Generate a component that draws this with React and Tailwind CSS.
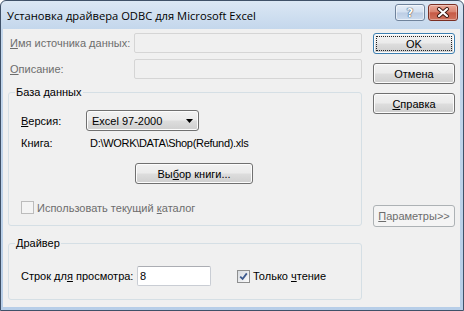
import React from "react";

const ui = "font-['Liberation_Sans',Arial,sans-serif] text-[11px] leading-[14px]";
const grayText = "text-[#6d6d6d]";
const btnFace =
  "bg-[linear-gradient(to_bottom,#f2f2f2_0%,#ebebeb_48%,#dddddd_52%,#cfcfcf_100%)] shadow-[inset_0_0_0_1px_#fcfcfc]";

function Button({ children, className = "", primary = false, disabled = false }) {
  if (disabled) {
    return (
      <div
        className={`flex items-center justify-center rounded-[3px] border border-[#adb2b5] bg-[#f4f4f4] ${grayText} ${className}`}
      >
        {children}
      </div>
    );
  }
  if (primary) {
    return (
      <div
        className={`flex rounded-[3px] border border-[#3c7fb1] p-[2px] ${btnFace} shadow-[inset_0_0_0_1px_#9fe0f9] ${className}`}
      >
        <div className="flex flex-1 items-center justify-center border border-dotted border-[#222]">
          {children}
        </div>
      </div>
    );
  }
  return (
    <div
      className={`flex items-center justify-center rounded-[3px] border border-[#707070] ${btnFace} ${className}`}
    >
      {children}
    </div>
  );
}

function Checkbox({ checked = false, disabled = false, className = "" }) {
  return (
    <span
      className={`flex h-[13px] w-[13px] shrink-0 items-center justify-center border ${
        disabled
          ? "border-[#bcbcbc] bg-[#f4f4f4]"
          : "border-[#8e8f8f] bg-[linear-gradient(135deg,#d7dbe0,#fbfbfb)]"
      } ${className}`}
    >
      {checked && (
        <svg width="9" height="9" viewBox="0 0 9 9">
          <path d="M1.2 4.6 L3.6 7 L7.8 1.4" fill="none" stroke="#3d5a8e" strokeWidth="1.8" />
        </svg>
      )}
    </span>
  );
}

function TitleBar() {
  return (
    <div className="flex h-[28px] shrink-0">
      <div className="self-center pl-[6px] pt-[1px] font-['Open_Sans','Noto_Sans',sans-serif] text-[11.2px] text-black">
        Установка драйвера ODBC для Microsoft Excel
      </div>
      <div className="ml-auto mr-[5px] mt-[3px] flex gap-[3px] self-start">
        <div className="flex h-[17px] w-[30px] items-center justify-center rounded-[3px] border border-[#6f839c] bg-[linear-gradient(to_bottom,#e6eef8_0%,#d3e0f0_48%,#bccde4_52%,#cddcef_100%)] shadow-[inset_0_0_0_1px_rgba(255,255,255,0.55)]">
          <span className="font-['DejaVu_Sans',sans-serif] text-[12px] font-bold leading-none text-white [text-shadow:0_0_1px_#1f2f45,0_0_1px_#1f2f45]">
            ?
          </span>
        </div>
        <div className="flex h-[17px] w-[30px] items-center justify-center rounded-[3px] border border-[#7a2f24] bg-[linear-gradient(to_bottom,#eaa898_0%,#d98471_46%,#c65945_52%,#d0735e_100%)] shadow-[inset_0_0_0_1px_rgba(255,255,255,0.35)]">
          <svg width="14" height="11" viewBox="0 0 14 11">
            <path d="M3 2 L11 9 M11 2 L3 9" stroke="#3b1710" strokeWidth="4" strokeLinecap="round" />
            <path d="M3 2 L11 9 M11 2 L3 9" stroke="#ffffff" strokeWidth="2.2" strokeLinecap="round" />
          </svg>
        </div>
      </div>
    </div>
  );
}

export default function App() {
  return (
    <div className={`h-[311px] w-[464px] text-black ${ui}`}>
      <div className="flex h-full flex-col rounded-t-[6px] border border-[#3f5168] bg-[linear-gradient(to_bottom,#dbe7f4_0px,#c4d7ec_28px,#b7cee8_100%)]">
        <TitleBar />
        <div className="flex flex-1 pb-[3px] pl-[2px] pr-[3px]">
          <div className="flex flex-1 bg-[#f0f0f0] pl-[5px] pt-[4px]">
            <div className="flex w-[354px] flex-col">
              <div className="flex h-[20px] items-center">
                <span className={`w-[126px] pl-[2px] ${grayText}`}>
                  <u>И</u>мя источника данных:
                </span>
                <div className="h-[20px] w-[228px] rounded-[2px] border border-[#d5d5d5]" />
              </div>
              <div className="mt-[6px] flex h-[20px] items-center">
                <span className={`w-[126px] pl-[2px] ${grayText}`}>
                  <u>О</u>писание:
                </span>
                <div className="h-[20px] w-[228px] rounded-[2px] border border-[#d5d5d5]" />
              </div>

              <fieldset className="mt-[6px] rounded-[3px] border border-[#d5dfe5]">
                <legend className="ml-[6px] px-[1px]">База данных</legend>
                <div className="pb-[11px] pl-[12px] pt-[11px]">
                  <div className="flex h-[21px] items-center">
                    <span className="w-[65px]">
                      <u>В</u>ерсия:
                    </span>
                    <div
                      className={`flex h-[21px] w-[113px] items-center justify-between rounded-[3px] border border-[#707070] pl-[5px] pr-[5px] ${btnFace}`}
                    >
                      <span>Excel 97-2000</span>
                      <svg width="7" height="4" viewBox="0 0 7 4">
                        <path d="M0 0 H7 L3.5 4 Z" fill="#000" />
                      </svg>
                    </div>
                  </div>
                  <div className="mt-[5px] flex h-[14px] items-center">
                    <span className="w-[69px]">Книга:</span>
                    <span className="tracking-[-0.3px]">{"D:\\WORK\\DATA\\Shop(Refund).xls"}</span>
                  </div>
                  <Button className="ml-[114px] mt-[13px] h-[21px] w-[118px]">
                    Вы<u>б</u>ор книги...
                  </Button>
                  <div className={`mt-[17px] flex h-[13px] items-center ${grayText}`}>
                    <Checkbox disabled />
                    <span className="ml-[3px]">
                      Использовать текущий <u>к</u>аталог
                    </span>
                  </div>
                </div>
              </fieldset>

              <fieldset className="mt-[10px] rounded-[3px] border border-[#d5dfe5]">
                <legend className="ml-[6px] px-[1px]">Драйвер</legend>
                <div className="flex items-center pb-[13px] pl-[12px] pt-[16px]">
                  <span className="w-[116px]">
                    Строк дл<u>я</u> просмотра:
                  </span>
                  <div className="flex h-[20px] w-[74px] items-center rounded-[2px] border border-[#c9cdd4] border-t-[#abadb3] bg-white pl-[2px]">
                    8
                  </div>
                  <Checkbox checked className="ml-[26px]" />
                  <span className="ml-[3px]">
                    Только <u>ч</u>тение
                  </span>
                </div>
              </fieldset>
            </div>

            <div className="ml-[11px] flex w-[82px] flex-col">
              <Button primary className="h-[21px]">
                OK
              </Button>
              <Button className="mt-[9px] h-[21px]">Отмена</Button>
              <Button className="mt-[9px] h-[21px]">
                <u>С</u>правка
              </Button>
              <Button disabled className="mt-[91px] h-[22px]">
                <u>П</u>араметры&gt;&gt;
              </Button>
            </div>
          </div>
        </div>
      </div>
    </div>
  );
}
